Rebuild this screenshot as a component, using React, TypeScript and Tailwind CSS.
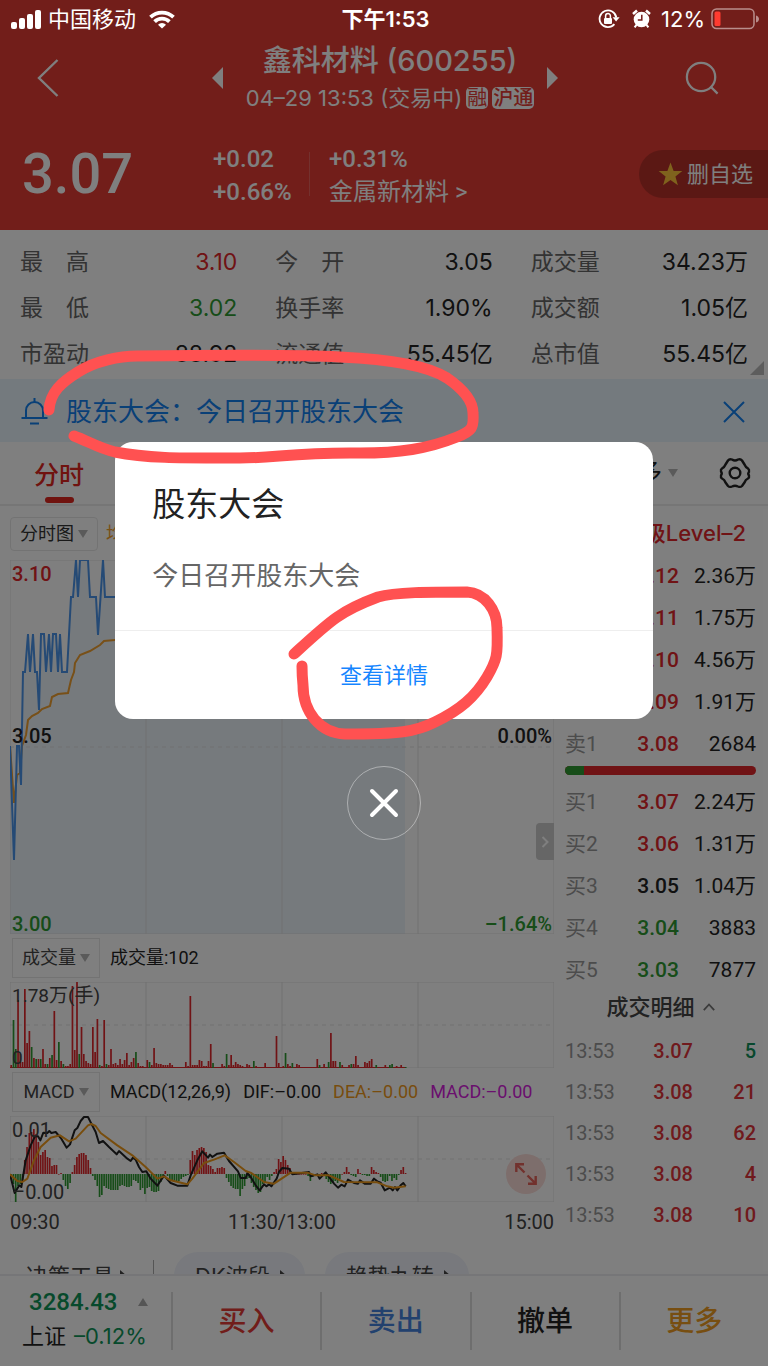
import { useState } from "react";

import clsx from "clsx";

type Tone = "red" | "green" | "black";

const toneClass: Record<Tone, string> = {
  red: "text-[#e0262b]",
  green: "text-[#2f9a33]",
  black: "text-[#222]",
};

const stats: { label: string; value: string; tone: Tone }[] = [
  { label: "最　高", value: "3.10", tone: "red" },
  { label: "今　开", value: "3.05", tone: "black" },
  { label: "成交量", value: "34.23万", tone: "black" },
  { label: "最　低", value: "3.02", tone: "green" },
  { label: "换手率", value: "1.90%", tone: "black" },
  { label: "成交额", value: "1.05亿", tone: "black" },
  { label: "市盈动", value: "88.92", tone: "black" },
  { label: "流通值", value: "55.45亿", tone: "black" },
  { label: "总市值", value: "55.45亿", tone: "black" },
];

type Quote = { label: string; price: string; volume: string; tone: Tone };

const asks: Quote[] = [
  { label: "卖5", price: "3.12", volume: "2.36万", tone: "red" },
  { label: "卖4", price: "3.11", volume: "1.75万", tone: "red" },
  { label: "卖3", price: "3.10", volume: "4.56万", tone: "red" },
  { label: "卖2", price: "3.09", volume: "1.91万", tone: "red" },
  { label: "卖1", price: "3.08", volume: "2684", tone: "red" },
];

const bids: Quote[] = [
  { label: "买1", price: "3.07", volume: "2.24万", tone: "red" },
  { label: "买2", price: "3.06", volume: "1.31万", tone: "red" },
  { label: "买3", price: "3.05", volume: "1.04万", tone: "black" },
  { label: "买4", price: "3.04", volume: "3883", tone: "green" },
  { label: "买5", price: "3.03", volume: "7877", tone: "green" },
];

const trades = [
  { price: "3.07", volume: "5", up: false },
  { price: "3.08", volume: "21", up: true },
  { price: "3.08", volume: "62", up: true },
  { price: "3.08", volume: "4", up: true },
  { price: "3.08", volume: "10", up: true },
];

// one entry per minute, negative means a falling minute
const volumes = [
  3, -48, -19, 68, 14, 6, 79, 25, 37, -21, 10, -9, 9, -9, 19, 4, -4, 10, -13, 57, 8, -26, 7, -4, 2, 2, 4, 82, 18, 86,
  -14, 41, 14, 7, 5, 4, 41, 16, 49, -3, 2, 48, -4, 3, 19, 4, 5, 3, 9, 4, 8, 15, 3, 6, 10, -16, 5, 2, 2, 1, 8, -6, 3,
  20, 5, 4, 4, 3, 3, 3, 5, 3, 1, 1, 1, 1, 1, 6, 2, 72, 3, 3, 3, 8, 7, 2, 2, 7, 24, -5, 0, 1, 0, 4, 2, -14, 3, 13, 3,
  6, 4, 3, 2, 1, 4, 3, 1, -7, 2, 1, 1, 1, 5, 0, 1, 0, 1, 32, 5, 1, 2, -15, 4, 2, -5, 1, 4, 3, 1, 1, 1, 1, 1, 1, 1, 9,
  -3, 1, 4, 1, -6, 35, 7, 7, 1, -6, 3, 1, 1, 3, -4, 4, 12, 3, 1, 1, 6, 5, 7, 9, 1, -3, 1, 1, 1, 3, 1, -3, -4, 1, 2, 1,
  3, 1, -1,
];

const macd = [
  -1, -10, -28, -12, -10, -6, 14, 27, 41, 42, 45, 40, 32, 19, 22, 24, 17, 16, 8, 9, 9, 0, 1, -6, -12, -15, -9, 2, 9,
  17, 20, 21, 21, 19, 14, 6, -2, -6, -12, -23, -21, -12, -14, -15, -16, -16, -16, -16, -12, -11, -12, -13, -13, -12,
  -6, -7, -9, -16, -14, -20, -14, -13, -17, -18, -18, -17, -8, -4, 3, -2, -6, -7, -8, -8, -7, -5, -3, -2, -1, 14, 23,
  19, 24, 26, 27, 26, 22, 9, 8, 5, 2, 6, 6, 7, 6, -4, -8, -12, -14, -15, -15, -22, -15, -12, -5, -4, -9, -13, -16,
  -19, -18, -10, -8, -3, -6, -2, 2, 5, 15, 12, 18, 14, 9, 6, 2, 0, 0, 0, 0, 0, 0, -2, -7, -3, -1, -2, -1, 1, -1, -5,
  -8, -10, -8, -7, -9, -5, 0, 2, 7, 2, -1, -2, -3, 5, 1, -1, -1, -2, -2, 7, 4, 2, 1, -3, -7, -8, -7, -2, -7, -4, -6,
  -1, 4, 7, 1,
];

const priceLine =
  "0,186 4,300 7,186 9,186 11,225 13,112 15,112 18,74 20,112 23,74 25,112 27,112 29,150 31,74 34,74 36,112 39,74 41,112 43,74 46,74 48,112 50,74 52,112 57,112 61,37 63,37 66,0 68,37 70,0 78,0 80,37 86,37 88,75 93,0 95,37 395,37";

const averageLine =
  "0,186 4,243 7,215 10,213 12,186 16,175 18,160 22,156 28,153 32,149 40,146 42,137 48,134 58,133 61,120 64,112 65,103 70,95 80,91 90,85 94,81 105,80 395,80";

const difLine =
  "28,222 42,278 56,255 62,260 75,180 90,135 103,108 112,108 119,120 128,97 140,98 146,92 152,98 165,95 182,115 198,142 208,132 222,90 230,83 240,62 250,50 262,50 272,70 285,95 295,128 307,122 325,140 348,162 355,152 380,175 390,182 397,172 405,178 415,200 425,215 437,213 450,235 470,256 490,226 510,248 530,256 560,256 570,225 590,180 605,153 622,172 628,163 635,170 650,160 670,157 685,182 712,213 720,233 735,233 740,218 750,230 765,255 777,270 790,252 797,258 805,252 812,258 828,235 835,215 845,203 865,205 875,222 925,215 930,228 950,222 957,235 975,216 1000,250 1012,262 1022,253 1032,258 1042,238 1060,248 1072,250 1078,240 1092,250 1110,250 1120,235 1130,243 1140,247 1152,270 1168,262 1176,270 1183,260 1190,270 1200,255 1208,248 1215,258";

const deaLine =
  "28,222 50,242 65,245 80,235 100,180 120,140 150,112 178,105 205,123 225,115 262,75 272,71 285,77 300,98 350,135 395,165 435,200 470,235 490,228 510,240 560,252 575,235 610,188 640,178 672,165 700,185 735,212 752,218 790,245 820,250 835,240 870,217 920,217 945,225 985,225 1030,245 1130,246 1160,258 1180,262 1215,258";

function StatusBar() {
  return (
    <div className="absolute inset-x-0 top-0 z-20 grid h-[38px] grid-cols-[1fr_auto_1fr] items-center pr-2 pl-[11px] text-[22px] text-white">
      <div className="flex items-center gap-[7px]">
        <svg width="30" height="19" viewBox="0 0 30 19" fill="#fff">
          <rect x="0" y="12" width="6" height="7" rx="2" />
          <rect x="8" y="8" width="6" height="11" rx="2" />
          <rect x="16" y="4" width="6" height="15" rx="2" />
          <rect x="24" y="0" width="6" height="19" rx="2" />
        </svg>
        <span>中国移动</span>
        <svg className="ml-1.5" width="26" height="19" viewBox="0 0 26 19" fill="none" stroke="#fff" strokeWidth="3.8">
          <path d="M1.5 7.2A16.5 16.5 0 0 1 24.5 7.2" />
          <path d="M5.6 11.6A10.6 10.6 0 0 1 20.4 11.6" />
          <path d="M13 18.6L9 14.8A5.6 5.6 0 0 1 17 14.8Z" fill="#fff" stroke="none" />
        </svg>
      </div>
      <span className="font-semibold">下午1:53</span>
      <div className="flex items-center justify-end gap-1.5">
        <svg className="mr-1.5" width="22" height="20" viewBox="0 0 22 20" fill="none" stroke="#fff" strokeWidth="1.8">
          <path d="M16.4 15.2A8.4 8.4 0 1 1 18.3 8.5" />
          <path d="M14.6 8.3H21.6L18.1 12.4Z" fill="#fff" stroke="none" />
          <rect x="6" y="9" width="8" height="6" rx="1" fill="#fff" stroke="none" />
          <path d="M7.6 9V7A2.4 2.4 0 0 1 12.4 7V9" strokeWidth="1.5" />
        </svg>
        <svg className="mr-1" width="19" height="20" viewBox="0 0 19 20">
          <circle cx="9.5" cy="10.5" r="7.8" fill="#fff" />
          <path d="M1 5L5 1.6M18 5L14 1.6" stroke="#fff" strokeWidth="2.6" />
          <path d="M4.5 15.8L2.6 18.4M14.5 15.8L16.4 18.4" stroke="#fff" strokeWidth="2" />
          <path d="M9.8 5.8V11H5.8" fill="none" stroke="#741d1a" strokeWidth="1.5" />
        </svg>
        <span>12%</span>
        <svg width="49" height="22" viewBox="0 0 49 22">
          <rect x="1" y="1" width="42" height="19.5" rx="4.5" fill="none" stroke="#b98e8c" strokeWidth="1.5" />
          <rect x="3.5" y="3.5" width="6" height="14.5" rx="1.5" fill="#ff3b30" />
          <path d="M45 7.5C49 8.5 49 13.5 45 14.5Z" fill="#b98e8c" />
        </svg>
      </div>
    </div>
  );
}

function Header() {
  return (
    <header className="bg-[#e43c34] pt-[38px] text-white">
      <div className="flex h-20 items-center justify-between pr-[38px] pl-6">
        <button type="button" aria-label="返回" className="flex size-12 items-center justify-center">
          <svg width="22" height="38" viewBox="0 0 22 38" fill="none" stroke="#fff" strokeWidth="2.4">
            <path d="M20.5 1L2 19L20.5 37" />
          </svg>
        </button>
        <div className="ml-6 flex w-[346px] items-center justify-between">
          <button type="button" aria-label="上一只">
            <svg width="11" height="22" viewBox="0 0 11 22" fill="#fff">
              <path d="M11 0V22L0 11Z" />
            </svg>
          </button>
          <div className="flex flex-col items-center pl-2.5">
            <h1 className="text-[29px] leading-10 font-medium">鑫科材料 (600255)</h1>
            <div className="flex items-center gap-1 text-[22px] leading-[34px] whitespace-nowrap">
              <span>04–29 13:53 (交易中)</span>
              <span className="rounded-[5px] bg-white px-px text-[20px] leading-[22px] text-[#e43c34]">融</span>
              <span className="rounded-[5px] bg-white px-px text-[20px] leading-[22px] font-medium text-[#e43c34]">
                沪通
              </span>
            </div>
          </div>
          <button type="button" aria-label="下一只">
            <svg width="11" height="22" viewBox="0 0 11 22" fill="#fff">
              <path d="M0 0V22L11 11Z" />
            </svg>
          </button>
        </div>
        <button type="button" aria-label="搜索" className="flex size-14 items-center justify-center">
          <svg width="34" height="34" viewBox="0 0 36 36" fill="none" stroke="#fff" strokeWidth="2.4">
            <circle cx="17" cy="17" r="15" />
            <path d="M27 27L34.5 34.5" />
          </svg>
        </button>
      </div>
      <div className="flex h-28 items-center pl-[22px] font-[Roboto,'Noto_Sans_CJK_SC',sans-serif] text-2xl leading-[33px]">
        <span className="w-[191px] text-[56px] font-medium">3.07</span>
        <div className="w-24 pt-1 font-medium">
          <p>+0.02</p>
          <p>+0.66%</p>
        </div>
        <div className="h-11 border-l border-white/20" />
        <div className="ml-[19px] pt-1">
          <p className="font-medium">+0.31%</p>
          <a href="#sector">金属新材料 &gt;</a>
        </div>
        <button
          type="button"
          className="ml-auto flex h-12 items-center gap-1 rounded-l-full bg-black/20 pr-[15px] pl-[19px] text-[22px]"
        >
          <svg width="25" height="24" viewBox="0 0 25 24" fill="#ffc53a">
            <path d="M12.5 0.5L15.6 8.9L24.3 9.1L17.4 14.5L19.9 23.2L12.5 18.1L5.1 23.2L7.6 14.5L0.7 9.1L9.4 8.9Z" />
          </svg>
          删自选
        </button>
      </div>
    </header>
  );
}

function Stats() {
  return (
    <section className="relative bg-white px-5 pt-[9px] pb-0.5">
      <dl className="grid grid-cols-3 gap-x-[38px] text-[23px] leading-[46px]">
        {stats.map((item) => (
          <div key={item.label} className="flex justify-between">
            <dt className="text-[#666]">{item.label}</dt>
            <dd className={toneClass[item.tone]}>{item.value}</dd>
          </div>
        ))}
      </dl>
      <svg className="absolute right-1 bottom-1" width="14" height="14" viewBox="0 0 14 14" fill="#bbb">
        <path d="M14 0V14H0Z" />
      </svg>
    </section>
  );
}

function Notice() {
  return (
    <div className="flex h-[63px] items-center bg-[#e9f4fd] pt-0.5 pr-[23px] pl-[21px] text-[26px] text-[#1280ee]">
      <svg width="27" height="27" viewBox="0 0 27 27" fill="none" stroke="currentColor" strokeWidth="2">
        <path d="M13.5 0V4M5 20V12.5A8.5 8.5 0 0 1 22 12.5V20M0.5 20H26.5M9 25.5H18" />
      </svg>
      <p className="ml-[18px] flex-1">股东大会：今日召开股东大会</p>
      <button type="button" aria-label="关闭提示">
        <svg width="22" height="22" viewBox="0 0 22 22" fill="none" stroke="currentColor" strokeWidth="2">
          <path d="M1 1L21 21M21 1L1 21" />
        </svg>
      </button>
    </div>
  );
}

function Caret() {
  return (
    <svg width="10" height="8" viewBox="0 0 10 8" fill="#b5b5b5">
      <path d="M0 0H10L5 8Z" />
    </svg>
  );
}

function Tabs() {
  return (
    <nav className="flex h-16 items-center border-b-2 border-[#ededed] pr-[17px] pl-[34px] text-[25px]">
      <button type="button" className="flex h-full flex-col items-center pt-[13px] font-medium text-[#e0261f]">
        <span className="leading-10">分时</span>
        <span className="mt-0.5 h-1.5 w-[29px] rounded-full bg-[#e0261f]" />
      </button>
      <button type="button" className="ml-auto flex items-center gap-1.5 text-[#222]">
        更多
        <Caret />
      </button>
      <button type="button" aria-label="设置" className="ml-[41px]">
        <svg width="32" height="32" viewBox="0 0 32 32" fill="none" stroke="#222" strokeWidth="2.4">
          <path
            strokeLinejoin="round"
            d="M9 3.5Q10.5 1.5 13 2.5Q16 4.5 19 2.5Q21.5 1.5 23 3.5L25.5 7.5Q26.5 10 29 11.5Q30.5 12.5 30 15Q28.5 16.5 30 18.5Q30.5 20.5 29 21.5Q26.5 22.5 25.5 25.5L23 29Q21.5 30.5 19 29.5Q16 28 13 29.5Q10.5 30.5 9 29L6.5 25.5Q5.5 22.5 3 21.5Q1.5 20.5 2 18.5Q3.5 16.5 2 14.5Q1.5 12.5 3 11.5Q5.5 10 6.5 7.5Z"
          />
          <circle cx="16" cy="16" r="5.3" />
        </svg>
      </button>
    </nav>
  );
}

function Grid({ width, height, x = 0, y = 0 }: { width: number; height: number; x?: number; y?: number }) {
  return (
    <g stroke="#e2e2e2" fill="none">
      {[0, 1, 2, 3, 4].map((i) => (
        <path key={i} vectorEffect="non-scaling-stroke" d={`M${x + (width / 4) * i} ${y}V${y + height}`} />
      ))}
      <path vectorEffect="non-scaling-stroke" d={`M${x} ${y}H${x + width}M${x} ${y + height}H${x + width}`} />
      <path vectorEffect="non-scaling-stroke" strokeDasharray="4 4" d={`M${x} ${y + height / 2}H${x + width}`} />
    </g>
  );
}

function IndicatorButton({ children }: { children: string }) {
  return (
    <button
      type="button"
      className="flex h-10 w-[88px] shrink-0 items-center justify-center gap-1 border border-[#e6e6e6] text-[#444]"
    >
      {children}
      <Caret />
    </button>
  );
}

function Charts() {
  return (
    <div className="min-w-0 flex-1 pt-[11px] pl-2.5 font-[Roboto,'Noto_Sans_CJK_SC',sans-serif] text-lg">
      <div className="flex items-center gap-2">
        <button
          type="button"
          className="flex h-[34px] w-[88px] items-center justify-center gap-1 rounded border border-[#e6e6e6] text-[#333]"
        >
          分时图
          <Caret />
        </button>
        <span className="text-[#f2a02c]">均价:3.07</span>
      </div>

      <div className="relative mt-[9px] text-xl leading-5 font-medium">
        <svg className="block h-[374px] w-full" viewBox="0 0 544 374" preserveAspectRatio="none">
          <polygon points={`${priceLine} 395,374 0,374`} fill="#ecf4fb" />
          <Grid width={544} height={374} />
          <polyline points={averageLine} fill="none" stroke="#f0a030" strokeWidth="2" />
          <polyline points={priceLine} fill="none" stroke="#4a94ea" strokeWidth="2" />
        </svg>
        <span className="absolute top-1 left-0.5 text-[#e0262b]">3.10</span>
        <span className="absolute top-[166px] left-0.5 text-[#222]">3.05</span>
        <span className="absolute bottom-0 left-0.5 text-[#2f9a33]">3.00</span>
        <span className="absolute top-[166px] right-0.5 text-[#222]">0.00%</span>
        <span className="absolute right-0.5 bottom-0 text-[#2f9a33]">–1.64%</span>
        <button
          type="button"
          aria-label="收起盘口"
          className="absolute right-0 bottom-[74px] flex h-[37px] w-[18px] items-center justify-center rounded-l bg-[#ccc]"
        >
          <svg width="8" height="12" viewBox="0 0 8 12" fill="none" stroke="#fff" strokeWidth="2">
            <path d="M1.5 1L6.5 6L1.5 11" />
          </svg>
        </button>
      </div>

      <div className="flex h-12 items-center gap-2.5 pl-0.5">
        <IndicatorButton>成交量</IndicatorButton>
        <span className="text-[#222]">成交量:102</span>
      </div>
      <div className="relative text-[19px] leading-5 text-[#444]">
        <svg className="block h-[86px] w-full" viewBox="0 0 544 86" preserveAspectRatio="none">
          <Grid width={544} height={86} />
          <path d="M0 85.5H395" stroke="#e0262b" />
          {volumes.map((v, i) => (
            <rect
              key={i}
              x={i * 2.267 + 0.4}
              y={86 - Math.abs(v)}
              width="1.7"
              height={Math.abs(v)}
              fill={v < 0 ? "#2f9a33" : "#e0262b"}
            />
          ))}
        </svg>
        <span className="absolute top-1 left-0.5">1.78万(手)</span>
        <span className="absolute bottom-0 left-0.5">0</span>
      </div>

      <div className="flex h-12 items-center gap-2.5 pl-0.5 whitespace-nowrap">
        <IndicatorButton>MACD</IndicatorButton>
        <div className="flex gap-3 text-[#222]">
          <span>MACD(12,26,9)</span>
          <span>DIF:–0.00</span>
          <span className="text-[#f09a1a]">DEA:–0.00</span>
          <span className="text-[#d420dc]">MACD:–0.00</span>
        </div>
      </div>
      <div className="relative text-xl leading-5 text-[#444]">
        <svg className="block h-[86px] w-full" viewBox="28 47 1632 258" preserveAspectRatio="none">
          <Grid width={1632} height={258} x={28} y={47} />
          {macd.map((v, i) => (
            <rect
              key={i}
              x={29 + i * 6.8}
              y={v < 0 ? 221 : 221 - v * 3}
              width="5"
              height={Math.max(Math.abs(v) * 3, 2)}
              fill={v < 0 ? "#2f9a33" : "#e0262b"}
            />
          ))}
          <polyline points={difLine} fill="none" stroke="#222" strokeWidth="6" strokeLinejoin="round" />
          <polyline points={deaLine} fill="none" stroke="#f09a1a" strokeWidth="6" strokeLinejoin="round" />
        </svg>
        <span className="absolute top-1 left-0.5">0.01</span>
        <span className="absolute bottom-0 left-0.5">–0.00</span>
        <button
          type="button"
          aria-label="全屏"
          className="absolute right-2 bottom-2 flex size-10 items-center justify-center rounded-full bg-[#fbdcd8]"
        >
          <svg width="22" height="22" viewBox="0 0 22 22" fill="none" stroke="#e4625a" strokeWidth="2.4">
            <path d="M1.3 9V1.3H9M1.5 1.5L9.5 9.5M20.7 13V20.7H13M20.5 20.5L12.5 12.5" />
          </svg>
        </button>
      </div>
      <div className="flex h-10 items-center justify-between text-xl text-[#444]">
        <span>09:30</span>
        <span>11:30/13:00</span>
        <span>15:00</span>
      </div>
    </div>
  );
}

function QuoteTable({ rows }: { rows: Quote[] }) {
  return (
    <table className="w-full table-fixed text-[21px]">
      <tbody>
        {rows.map((row) => (
          <tr key={row.label} className="h-[42px]">
            <th scope="row" className="w-[50px] text-left font-normal text-[#999]">
              {row.label}
            </th>
            <td className={clsx("w-16 text-right font-medium", toneClass[row.tone])}>{row.price}</td>
            <td className="text-right text-[#222]">{row.volume}</td>
          </tr>
        ))}
      </tbody>
    </table>
  );
}

function OrderBook() {
  return (
    <aside className="w-[214px] shrink-0 pr-3 pl-[11px] font-[Roboto,'Noto_Sans_CJK_SC',sans-serif]">
      <a
        href="#level2"
        className="flex h-[50px] items-center justify-end pt-1 pr-2.5 font-[Inter,'Noto_Sans_CJK_SC',sans-serif] text-[22px] font-medium text-[#e0262b]"
      >
        升级Level–2
      </a>
      <QuoteTable rows={asks} />
      <div className="flex h-[9px] overflow-hidden rounded-full bg-[#e0262b]">
        <div className="w-1/10 bg-[#2f9a33]" />
      </div>
      <div className="pt-[7px]">
        <QuoteTable rows={bids} />
      </div>
      <button
        type="button"
        className="flex h-[38px] w-full items-center justify-center gap-2 pb-2 text-[22px] font-medium text-[#444]"
      >
        成交明细
        <svg width="12" height="8" viewBox="0 0 12 8" fill="none" stroke="#777" strokeWidth="1.8">
          <path d="M0.8 7.2L6 1.5L11.2 7.2" />
        </svg>
      </button>
      <table className="w-full table-fixed text-xl font-medium">
        <tbody>
          {trades.map((trade, i) => (
            <tr key={i} className="h-[41px]">
              <td className="w-16 font-normal text-[#999]">13:53</td>
              <td className="w-16 text-right text-[#e0343a]">{trade.price}</td>
              <td className={clsx("text-right", trade.up ? "text-[#e0343a]" : "text-[#10905a]")}>{trade.volume}</td>
            </tr>
          ))}
        </tbody>
      </table>
    </aside>
  );
}

function Tools() {
  return (
    <div className="flex items-center pt-2.5 pl-[26px] text-[22px] whitespace-nowrap text-[#444]">
      <a href="#tools" className="flex w-32 items-center gap-1.5 border-r border-[#aaa]">
        决策工具
        <svg width="7" height="12" viewBox="0 0 7 12" fill="#444">
          <path d="M0 0L7 6L0 12Z" />
        </svg>
      </a>
      {["DK波段", "趋势九转"].map((name) => (
        <a
          key={name}
          href="#tool"
          className="ml-5 flex h-12 items-center gap-2.5 rounded-full bg-[#f0f3fa] pr-[18px] pl-[21px]"
        >
          {name}
          <svg width="7" height="12" viewBox="0 0 7 12" fill="#444">
            <path d="M0 0L7 6L0 12Z" />
          </svg>
        </a>
      ))}
    </div>
  );
}

function TradeBar() {
  return (
    <footer className="flex h-[92px] shrink-0 items-center border-t-2 border-[#ececf0] bg-white text-[28px] font-medium">
      <a href="#index" className="w-[171px] shrink-0 pb-1 pl-[22px] font-normal whitespace-nowrap">
        <span className="flex items-center gap-5 pl-[7px] font-[Roboto,sans-serif] text-2xl leading-[34px] font-medium text-[#0f9458]">
          3284.43
          <svg width="10" height="8" viewBox="0 0 10 8" fill="#aaa">
            <path d="M0 8H10L5 0Z" />
          </svg>
        </span>
        <span className="flex items-center gap-2 text-[22px] leading-[34px] text-[#222]">
          上证 <span className="text-[#0f9458]">–0.12%</span>
        </span>
      </a>
      <button type="button" className="h-[58px] flex-1 border-l-2 border-[#ddd] text-[#e23a34]">
        买入
      </button>
      <button type="button" className="h-[58px] flex-1 border-l-2 border-[#ddd] text-[#4483dd]">
        卖出
      </button>
      <button type="button" className="h-[58px] flex-1 border-l-2 border-[#ddd] text-[#222]">
        撤单
      </button>
      <button type="button" className="h-[58px] flex-1 border-l-2 border-[#ddd] text-[#ef9c22]">
        更多
      </button>
    </footer>
  );
}

function MeetingDialog({ onClose }: { onClose: () => void }) {
  return (
    <div className="absolute inset-0 z-10 flex flex-col items-center justify-center bg-black/50 pb-[84px]">
      <div role="dialog" aria-labelledby="meeting-title" className="w-[70%] rounded-[18px] bg-white">
        <div className="border-b border-[#eee] px-[37px] pt-[38px] pb-[34px]">
          <h2 id="meeting-title" className="text-[33px] leading-[48px] text-[#222]">
            股东大会
          </h2>
          <p className="mt-7 text-[26px] leading-10 text-[#666]">今日召开股东大会</p>
        </div>
        <button type="button" className="h-[88px] w-full text-[22px] text-[#1585ff]">
          查看详情
        </button>
      </div>
      <button
        type="button"
        aria-label="关闭"
        onClick={onClose}
        className="mt-[47px] flex size-[74px] items-center justify-center rounded-full border border-white/40"
      >
        <svg width="30" height="30" viewBox="0 0 30 30" fill="none" stroke="#fff" strokeWidth="4" strokeLinecap="round">
          <path d="M3 3L27 27M27 3L3 27" />
        </svg>
      </button>
    </div>
  );
}

// hand-drawn red circles on top of everything
function Marker() {
  return (
    <svg
      className="pointer-events-none absolute inset-0 z-30 size-full"
      viewBox="0 0 768 1366"
      fill="none"
      stroke="#ff5151"
      strokeWidth="11"
      strokeLinecap="round"
      strokeLinejoin="round"
    >
      <path d="M49 410C50 392 62 382 78 372C95 361 120 356 137 356C220 355 300 355 340 357C385 359 425 364 447 378C463 389 473 401 473 413C474 428 472 431 457 437C430 448 400 454 350 453C290 453 275 458 240 458C190 458 150 459 115 452C98 448 88 441 74 436" />
      <path d="M294 654C330 621 340 611 378 597C395 592 430 592 467 592C485 593 497 610 497 628C498 655 497 660 487 677C475 697 460 710 435 722C415 732 400 734 345 734C320 733 303 712 303 685C302 675 302 670 302 666" />
    </svg>
  );
}

export default function App() {
  const [open, setOpen] = useState(true);

  return (
    <div
      lang="zh-CN"
      className="relative flex h-screen flex-col overflow-hidden bg-white font-[Inter,'Noto_Sans_CJK_SC',sans-serif]"
    >
      <StatusBar />
      <main className="min-h-0 flex-1 overflow-hidden">
        <Header />
        <Stats />
        <Notice />
        <Tabs />
        <div className="flex">
          <Charts />
          <OrderBook />
        </div>
        <Tools />
      </main>
      <TradeBar />
      {open && <MeetingDialog onClose={() => setOpen(false)} />}
      <Marker />
    </div>
  );
}
